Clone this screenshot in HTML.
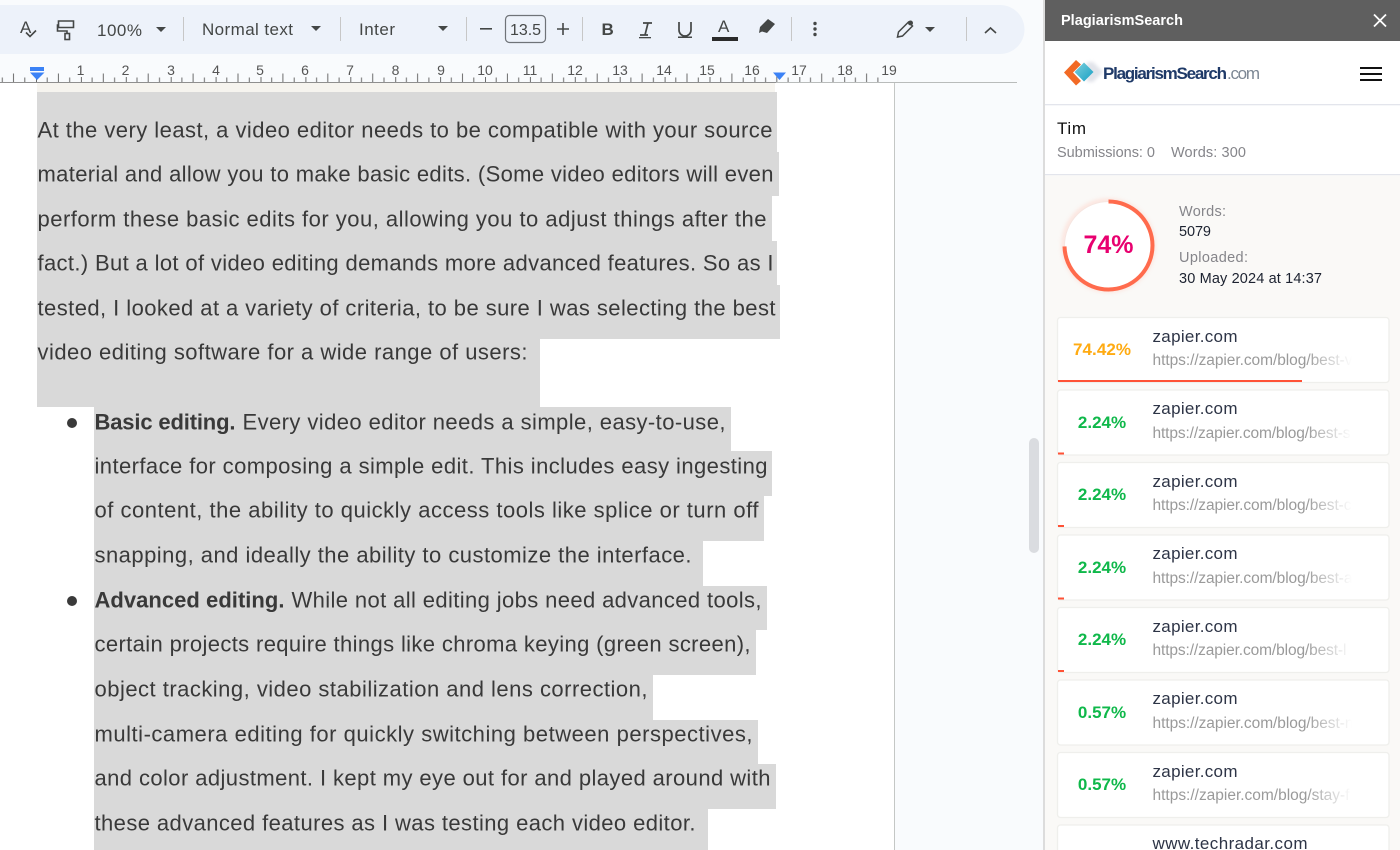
<!DOCTYPE html>
<html><head><meta charset="utf-8"><title>Docs</title>
<style>
html,body{margin:0;padding:0;background:#f9fbfd;width:1400px;height:850px;overflow:hidden}
svg{display:block;position:absolute;left:0;top:0}
text{font-family:"Liberation Sans",sans-serif;white-space:pre}
.d{font-size:22px;fill:#393939}
.b{font-size:22px;fill:#393939;font-weight:bold}
.t{font-size:17px;fill:#444746}
.r{font-size:14px;fill:#555;text-anchor:middle}
.p{font-size:17px;font-weight:bold;text-anchor:middle}
.h{font-size:17px;fill:#2d3446}
.u{font-size:15.5px;fill:url(#fade)}
.i{fill:none;stroke:#444746;stroke-width:1.6}
.g{font-size:14.5px;fill:#85858a}
.k{font-size:14.5px;fill:#1c2230}
</style></head><body>
<svg width="1400" height="850" viewBox="0 0 1400 850" xmlns="http://www.w3.org/2000/svg">
<defs>
<pattern id="tk" x="36" y="70" width="44.9" height="12" patternUnits="userSpaceOnUse">
<path d="M11.2 7.5V12M22.4 3.5V12M33.7 7.5V12M.5 7V12" stroke="#6b6b6b" stroke-width="1" fill="none"/>
</pattern>
<linearGradient id="fade" gradientUnits="userSpaceOnUse" x1="1306" y1="0" x2="1352" y2="0">
<stop offset="0" stop-color="#9a9a9a"/><stop offset="1" stop-color="#9a9a9a" stop-opacity="0"/>
</linearGradient>
<filter id="gl" x="-30%" y="-30%" width="160%" height="160%"><feGaussianBlur stdDeviation="2.5"/></filter>
<filter id="sf" x="-40%" y="-40%" width="180%" height="180%"><feGaussianBlur stdDeviation="1.5"/></filter>
<linearGradient id="lg" x1="0" x2="1" y1="0" y2="1"><stop offset="0" stop-color="#7fd0dc"/><stop offset="1" stop-color="#159fc4"/></linearGradient>
</defs>

<!-- document page -->
<rect x="0" y="83" width="894" height="767" fill="#fff"/>
<rect x="894" y="83" width="1" height="767" fill="#c4c7c5"/>
<rect x="37" y="83" width="738" height="9" fill="#f6f4ef"/>

<!-- selection -->
<g fill="#d9d9d9">
<rect x="37" y="92" width="740" height="60"/>
<rect x="37" y="152" width="742" height="44"/>
<rect x="37" y="196" width="735" height="45"/>
<rect x="37" y="241" width="740" height="44"/>
<rect x="37" y="285" width="743" height="54"/>
<rect x="37" y="339" width="503" height="68"/>
<rect x="94" y="407" width="637" height="44"/>
<rect x="94" y="451" width="678" height="45"/>
<rect x="94" y="496" width="670" height="45"/>
<rect x="94" y="541" width="609" height="45"/>
<rect x="94" y="586" width="673" height="44"/>
<rect x="94" y="630" width="662" height="45"/>
<rect x="94" y="675" width="559" height="45"/>
<rect x="94" y="720" width="664" height="44"/>
<rect x="94" y="764" width="682" height="45"/>
<rect x="94" y="809" width="614" height="41"/>
</g>

<!-- doc text -->
<g transform="translate(0.5,0.5)">
<text class="d" x="37" y="137" textLength="735">At the very least, a video editor needs to be compatible with your source</text>
<text class="d" x="37" y="181" textLength="736">material and allow you to make basic edits. (Some video editors will even</text>
<text class="d" x="37" y="226" textLength="729">perform these basic edits for you, allowing you to adjust things after the</text>
<text class="d" x="37" y="270" textLength="736">fact.) But a lot of video editing demands more advanced features. So as I</text>
<text class="d" x="37" y="315" textLength="738">tested, I looked at a variety of criteria, to be sure I was selecting the best</text>
<text class="d" x="37" y="359" textLength="490">video editing software for a wide range of users:</text>
<text class="b" x="94" y="429" textLength="141">Basic editing.</text>
<text class="d" x="242" y="429" textLength="483">Every video editor needs a simple, easy-to-use,</text>
<text class="d" x="94" y="473" textLength="673">interface for composing a simple edit. This includes easy ingesting</text>
<text class="d" x="94" y="517" textLength="664">of content, the ability to quickly access tools like splice or turn off</text>
<text class="d" x="94" y="562" textLength="597">snapping, and ideally the ability to customize the interface.</text>
<text class="b" x="94" y="607" textLength="190">Advanced editing.</text>
<text class="d" x="291" y="607" textLength="470">While not all editing jobs need advanced tools,</text>
<text class="d" x="94" y="651" textLength="656">certain projects require things like chroma keying (green screen),</text>
<text class="d" x="94" y="696" textLength="553">object tracking, video stabilization and lens correction,</text>
<text class="d" x="94" y="741" textLength="658">multi-camera editing for quickly switching between perspectives,</text>
<text class="d" x="94" y="785" textLength="676">and color adjustment. I kept my eye out for and played around with</text>
<text class="d" x="94" y="830" textLength="601">these advanced features as I was testing each video editor.</text>
</g>
<circle cx="72" cy="423" r="5" fill="#3a3a3a"/>
<circle cx="72" cy="601" r="5" fill="#3a3a3a"/>

<!-- toolbar -->
<path d="M0 5H1000a24.500 24.500 0 0 1 0 49H0Z" fill="#edf2fa"/>
<!-- spellcheck -->
<text x="20" y="33" font-size="17" fill="#444746" textLength="12">A</text>
<path class="i" d="M26 32.500l4 4 6-6"/>
<!-- paint roller -->
<path class="i" d="M58.500 21H73.500V27.500H58.500ZM58.500 25H57.500V31H67V34"/>
<rect class="i" x="65" y="33.500" width="4.500" height="6"/>
<text class="t" x="97" y="36" textLength="45">100%</text>
<path d="M156 27h10l-5 5z" fill="#444746"/>
<rect x="183" y="17" width="1" height="24" fill="#c7c7c7"/>
<text class="t" x="202" y="35" textLength="91">Normal text</text>
<path d="M311 26h10l-5 5z" fill="#444746"/>
<rect x="340" y="17" width="1" height="24" fill="#c7c7c7"/>
<text class="t" x="359" y="35" textLength="36">Inter</text>
<path d="M438 26h10l-5 5z" fill="#444746"/>
<rect x="466" y="17" width="1" height="24" fill="#c7c7c7"/>
<rect x="480" y="28" width="12" height="1.600" fill="#444746"/>
<rect x="505.500" y="15.500" width="40" height="27" rx="4" fill="none" stroke="#6f7378" stroke-width="1.200"/>
<text class="t" x="510" y="35" textLength="31" style="font-size:16px">13.5</text>
<path d="M557 29h12M563 23v12" stroke="#444746" stroke-width="1.600" fill="none"/>
<rect x="582" y="17" width="1" height="24" fill="#c7c7c7"/>
<text x="601.500" y="35" font-size="17" font-weight="bold" fill="#444746" textLength="11">B</text>
<path d="M643 23h9M640 35h8M648 23l-3 12" stroke="#444746" stroke-width="1.700" fill="none"/>
<rect x="639" y="37" width="12" height="1.300" fill="#444746"/>
<path d="M679 22v8a6 6 0 0 0 12 0v-8" stroke="#444746" stroke-width="1.700" fill="none"/>
<rect x="678" y="36.500" width="14" height="1.500" fill="#444746"/>
<text x="718" y="32" font-size="17" fill="#444746" textLength="12">A</text>
<rect x="712" y="37" width="26" height="4" fill="#2b2b2b"/>
<path d="M760 27l8-8 7 5-8 9-5-1.500-3 1.500z" fill="#444746"/>
<rect x="791" y="17" width="1" height="24" fill="#c7c7c7"/>
<circle cx="815" cy="23.500" r="1.700" fill="#444746"/><circle cx="815" cy="29" r="1.700" fill="#444746"/><circle cx="815" cy="34.500" r="1.700" fill="#444746"/>
<path d="M897.500 37l1-5 10-10 4 4-10 10z" fill="none" stroke="#444746" stroke-width="1.500"/>
<circle cx="910.500" cy="23" r="2.500" fill="#444746"/>
<path d="M925 27h10l-5 5z" fill="#444746"/>
<rect x="966" y="17" width="1" height="24" fill="#c7c7c7"/>
<path d="M985 33l5.500-5 5.500 5" fill="none" stroke="#444746" stroke-width="1.600"/>

<!-- ruler -->
<rect x="0" y="70" width="888" height="12" fill="url(#tk)"/>
<rect x="0" y="82" width="776" height="1" fill="#8f8f8f"/>
<rect x="776" y="82" width="241" height="1" fill="#b9bcbb"/>
<g>
<text class="r" x="80.500" y="75">1</text><text class="r" x="125.500" y="75">2</text><text class="r" x="171" y="75">3</text><text class="r" x="216" y="75">4</text><text class="r" x="260" y="75">5</text><text class="r" x="305" y="75">6</text><text class="r" x="350" y="75">7</text><text class="r" x="395.500" y="75">8</text><text class="r" x="441" y="75">9</text><text class="r" x="485" y="75">10</text><text class="r" x="530" y="75">11</text><text class="r" x="575" y="75">12</text><text class="r" x="620" y="75">13</text><text class="r" x="664" y="75">14</text><text class="r" x="707" y="75">15</text><text class="r" x="752" y="75">16</text><text class="r" x="799" y="75">17</text><text class="r" x="845" y="75">18</text><text class="r" x="889" y="75">19</text>
</g>
<rect x="30" y="67" width="14" height="4" fill="#3b82f6"/>
<path d="M30 72.500H44.500L37 80Z" fill="#3b82f6"/>
<path d="M773 72.500H786L779.500 80Z" fill="#3b82f6"/>

<!-- scrollbar -->
<rect x="1029" y="438" width="10" height="115" rx="5" fill="#dadce0"/>

<!-- sidebar -->
<rect x="1043" y="0" width="2" height="850" fill="#dcdcdc"/>
<rect x="1045" y="0" width="355" height="850" fill="#fff"/>
<rect x="1045" y="0" width="355" height="41" fill="#5f5f5f"/>
<text x="1061" y="25" font-size="14.500" font-weight="bold" fill="#fff" textLength="122">PlagiarismSearch</text>
<path d="M1374 14.500l12 12M1386 14.500l-12 12" stroke="#fff" stroke-width="1.800" fill="none"/>

<!-- logo -->
<path d="M1093 62l10 10-10 10-6 0 0-20z" fill="#c9ced9" opacity=".55" filter="url(#sf)"/>
<path d="M1076 60l-12 12.500 12 13 5-4.500-8-8.500 8-8z" fill="#f26a25"/>
<path d="M1084 62.500l9.500 9.500-9.500 9.500-9.500-9.500z" fill="url(#lg)"/>
<text x="1103" y="79" font-size="17" font-weight="bold" fill="#1f3a68" textLength="124">PlagiarismSearch</text>
<text x="1227" y="79" font-size="17" fill="#7c8794" textLength="33">.com</text>
<rect x="1360" y="67" width="22" height="2" fill="#111"/><rect x="1360" y="73" width="22" height="2" fill="#111"/><rect x="1360" y="79" width="22" height="2" fill="#111"/>
<rect x="1045" y="104" width="355" height="1.300" fill="#e3e5ec"/>

<!-- user -->
<text x="1057" y="134" font-size="17" fill="#111" textLength="29">Tim</text>
<text class="g" x="1057" y="157" textLength="98">Submissions: 0</text>
<text class="g" x="1171" y="157" textLength="75">Words: 300</text>
<rect x="1045" y="174" width="355" height="1.300" fill="#e3e5ec"/>
<rect x="1045" y="175.300" width="355" height="675" fill="#faf9f7"/>

<!-- score -->
<circle cx="1108.500" cy="245.500" r="44.500" fill="#fff" stroke="#ffb9a8" stroke-width="3" opacity=".6" filter="url(#gl)"/>
<circle cx="1108.500" cy="245.500" r="44" fill="#fff" stroke="#f6e6e1" stroke-width="1"/>
<circle cx="1108.500" cy="245.500" r="44" fill="none" stroke="#ff6b4d" stroke-width="4" stroke-dasharray="206 300" transform="rotate(-90 1108.500 245.500)"/>
<text x="1108.500" y="253" font-size="25" font-weight="bold" fill="#e8006f" text-anchor="middle">74%</text>
<text class="g" x="1179" y="216" textLength="47">Words:</text>
<text class="k" x="1179" y="236" textLength="32">5079</text>
<text class="g" x="1179" y="262" textLength="69">Uploaded:</text>
<text class="k" x="1179" y="283" textLength="143">30 May 2024 at 14:37</text>

<!-- cards -->
<g fill="#fff" stroke="#efefec" stroke-width="1.300">
<rect x="1057.500" y="317.500" width="331.500" height="65" rx="3"/>
<rect x="1057.500" y="390" width="331.500" height="65" rx="3"/>
<rect x="1057.500" y="462.500" width="331.500" height="65" rx="3"/>
<rect x="1057.500" y="535" width="331.500" height="65" rx="3"/>
<rect x="1057.500" y="607.500" width="331.500" height="65" rx="3"/>
<rect x="1057.500" y="680" width="331.500" height="65" rx="3"/>
<rect x="1057.500" y="752.500" width="331.500" height="65" rx="3"/>
<rect x="1057.500" y="825" width="331.500" height="65" rx="3"/>
</g>
<rect x="1058" y="380" width="244" height="2" fill="#ff5236"/>
<rect x="1058" y="452.500" width="6" height="2" fill="#ff5236"/>
<rect x="1058" y="525" width="6" height="2" fill="#ff5236"/>
<rect x="1058" y="597.500" width="6" height="2" fill="#ff5236"/>
<rect x="1058" y="670" width="6" height="2" fill="#ff5236"/>

<text class="p" x="1102" y="355" fill="#ffab12" textLength="58">74.42%</text>
<text class="h" x="1152.500" y="342" textLength="85">zapier.com</text>
<text class="u" x="1152.500" y="365" textLength="200">https://zapier.com/blog/best-v</text>

<text class="p" x="1102" y="428" fill="#0fb84a">2.24%</text>
<text class="h" x="1152.500" y="414" textLength="85">zapier.com</text>
<text class="u" x="1152.500" y="438" textLength="198">https://zapier.com/blog/best-s</text>

<text class="p" x="1102" y="500" fill="#0fb84a">2.24%</text>
<text class="h" x="1152.500" y="487" textLength="85">zapier.com</text>
<text class="u" x="1152.500" y="510" textLength="199">https://zapier.com/blog/best-c</text>

<text class="p" x="1102" y="573" fill="#0fb84a">2.24%</text>
<text class="h" x="1152.500" y="559" textLength="85">zapier.com</text>
<text class="u" x="1152.500" y="583" textLength="200">https://zapier.com/blog/best-a</text>

<text class="p" x="1102" y="645" fill="#0fb84a">2.24%</text>
<text class="h" x="1152.500" y="632" textLength="85">zapier.com</text>
<text class="u" x="1152.500" y="655" textLength="194">https://zapier.com/blog/best-l</text>

<text class="p" x="1102" y="718" fill="#0fb84a">0.57%</text>
<text class="h" x="1152.500" y="704" textLength="85">zapier.com</text>
<text class="u" x="1152.500" y="728" textLength="201">https://zapier.com/blog/best-n</text>

<text class="p" x="1102" y="790" fill="#0fb84a">0.57%</text>
<text class="h" x="1152.500" y="777" textLength="85">zapier.com</text>
<text class="u" x="1152.500" y="800" textLength="197">https://zapier.com/blog/stay-f</text>

<text class="h" x="1152.500" y="849" textLength="155">www.techradar.com</text>
</svg>
</body></html>
